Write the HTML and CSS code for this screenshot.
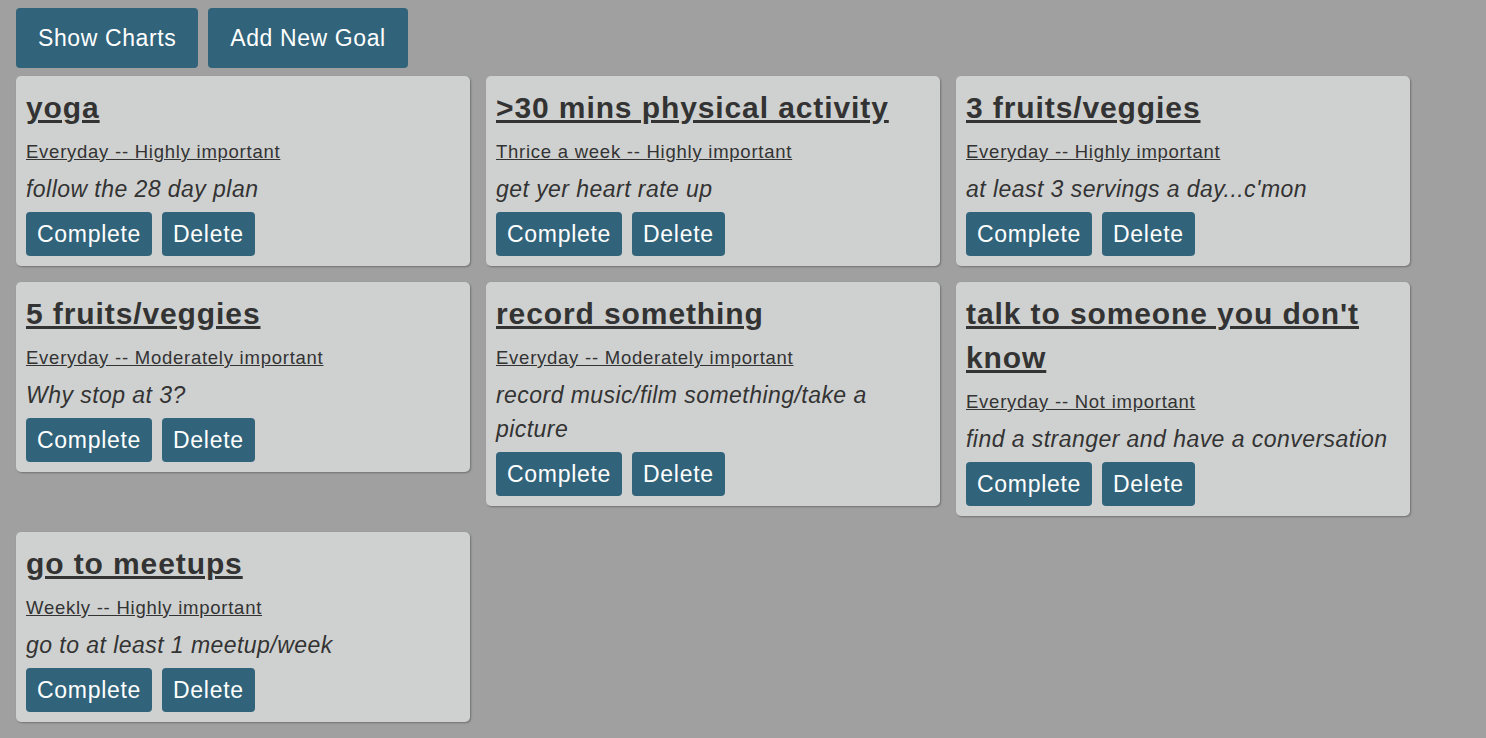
FILE: index.html
```html
<!DOCTYPE html>
<html lang="en">
<head>
<meta charset="utf-8">
<title>Goals</title>
<link rel="stylesheet" href="styles.css">
</head>
<body>
<div class="page">
  <div class="toolbar">
    <button class="btn btn-lg">Show Charts</button>
    <button class="btn btn-lg">Add New Goal</button>
  </div>
  <div class="goals">
    <div class="card">
      <h2 class="title">yoga</h2>
      <div class="meta">Everyday -- Highly important</div>
      <p class="desc">follow the 28 day plan</p>
      <div class="actions"><button class="btn btn-sm">Complete</button><button class="btn btn-sm">Delete</button></div>
    </div>
    <div class="card">
      <h2 class="title">&gt;30 mins physical activity</h2>
      <div class="meta">Thrice a week -- Highly important</div>
      <p class="desc">get yer heart rate up</p>
      <div class="actions"><button class="btn btn-sm">Complete</button><button class="btn btn-sm">Delete</button></div>
    </div>
    <div class="card">
      <h2 class="title">3 fruits/veggies</h2>
      <div class="meta">Everyday -- Highly important</div>
      <p class="desc">at least 3 servings a day...c'mon</p>
      <div class="actions"><button class="btn btn-sm">Complete</button><button class="btn btn-sm">Delete</button></div>
    </div>
    <div class="card">
      <h2 class="title">5 fruits/veggies</h2>
      <div class="meta">Everyday -- Moderately important</div>
      <p class="desc">Why stop at 3?</p>
      <div class="actions"><button class="btn btn-sm">Complete</button><button class="btn btn-sm">Delete</button></div>
    </div>
    <div class="card">
      <h2 class="title">record something</h2>
      <div class="meta">Everyday -- Moderately important</div>
      <p class="desc">record music/film something/take a picture</p>
      <div class="actions"><button class="btn btn-sm">Complete</button><button class="btn btn-sm">Delete</button></div>
    </div>
    <div class="card">
      <h2 class="title">talk to someone you don't know</h2>
      <div class="meta">Everyday -- Not important</div>
      <p class="desc">find a stranger and have a conversation</p>
      <div class="actions"><button class="btn btn-sm">Complete</button><button class="btn btn-sm">Delete</button></div>
    </div>
    <div class="card">
      <h2 class="title">go to meetups</h2>
      <div class="meta">Weekly -- Highly important</div>
      <p class="desc">go to at least 1 meetup/week</p>
      <div class="actions"><button class="btn btn-sm">Complete</button><button class="btn btn-sm">Delete</button></div>
    </div>
  </div>
</div>
</body>
</html>
```

FILE: styles.css
```css
html, body {
  margin: 0;
  padding: 0;
  background: #a0a0a0;
}

body {
  font-family: "Liberation Sans", Arial, sans-serif;
  color: #333333;
}

.page {
  padding: 8px 16px;
}

.toolbar {
  display: flex;
  gap: 10px;
}

.btn {
  font-family: "Liberation Sans", Arial, sans-serif;
  background: #31637a;
  color: #ffffff;
  border: none;
  border-radius: 4px;
  cursor: pointer;
  margin: 0;
}

.btn-lg {
  height: 60px;
  padding: 0 22px;
  font-size: 23px;
  letter-spacing: 0.6px;
}

.goals {
  display: flex;
  flex-wrap: wrap;
  align-items: flex-start;
  gap: 16px;
  margin-top: 8px;
}

.card {
  box-sizing: border-box;
  width: 454px;
  padding: 10px;
  background: #cfd1d0;
  border-radius: 5px;
  box-shadow: 1px 1px 2px rgba(0, 0, 0, 0.3);
}

.title {
  margin: 0;
  font-size: 30px;
  line-height: 44px;
  font-weight: bold;
  text-decoration: underline;
  letter-spacing: 0.9px;
}

.meta {
  margin-top: 8px;
  font-size: 18.5px;
  line-height: 27px;
  text-decoration: underline;
  letter-spacing: 0.75px;
}

.desc {
  margin: 7px 0 6px;
  font-size: 23px;
  line-height: 34px;
  font-style: italic;
  letter-spacing: 0.45px;
}

.actions {
  display: flex;
  gap: 10px;
}

.btn-sm {
  height: 44px;
  padding: 0 11px;
  font-size: 23px;
  letter-spacing: 0.7px;
}
```
